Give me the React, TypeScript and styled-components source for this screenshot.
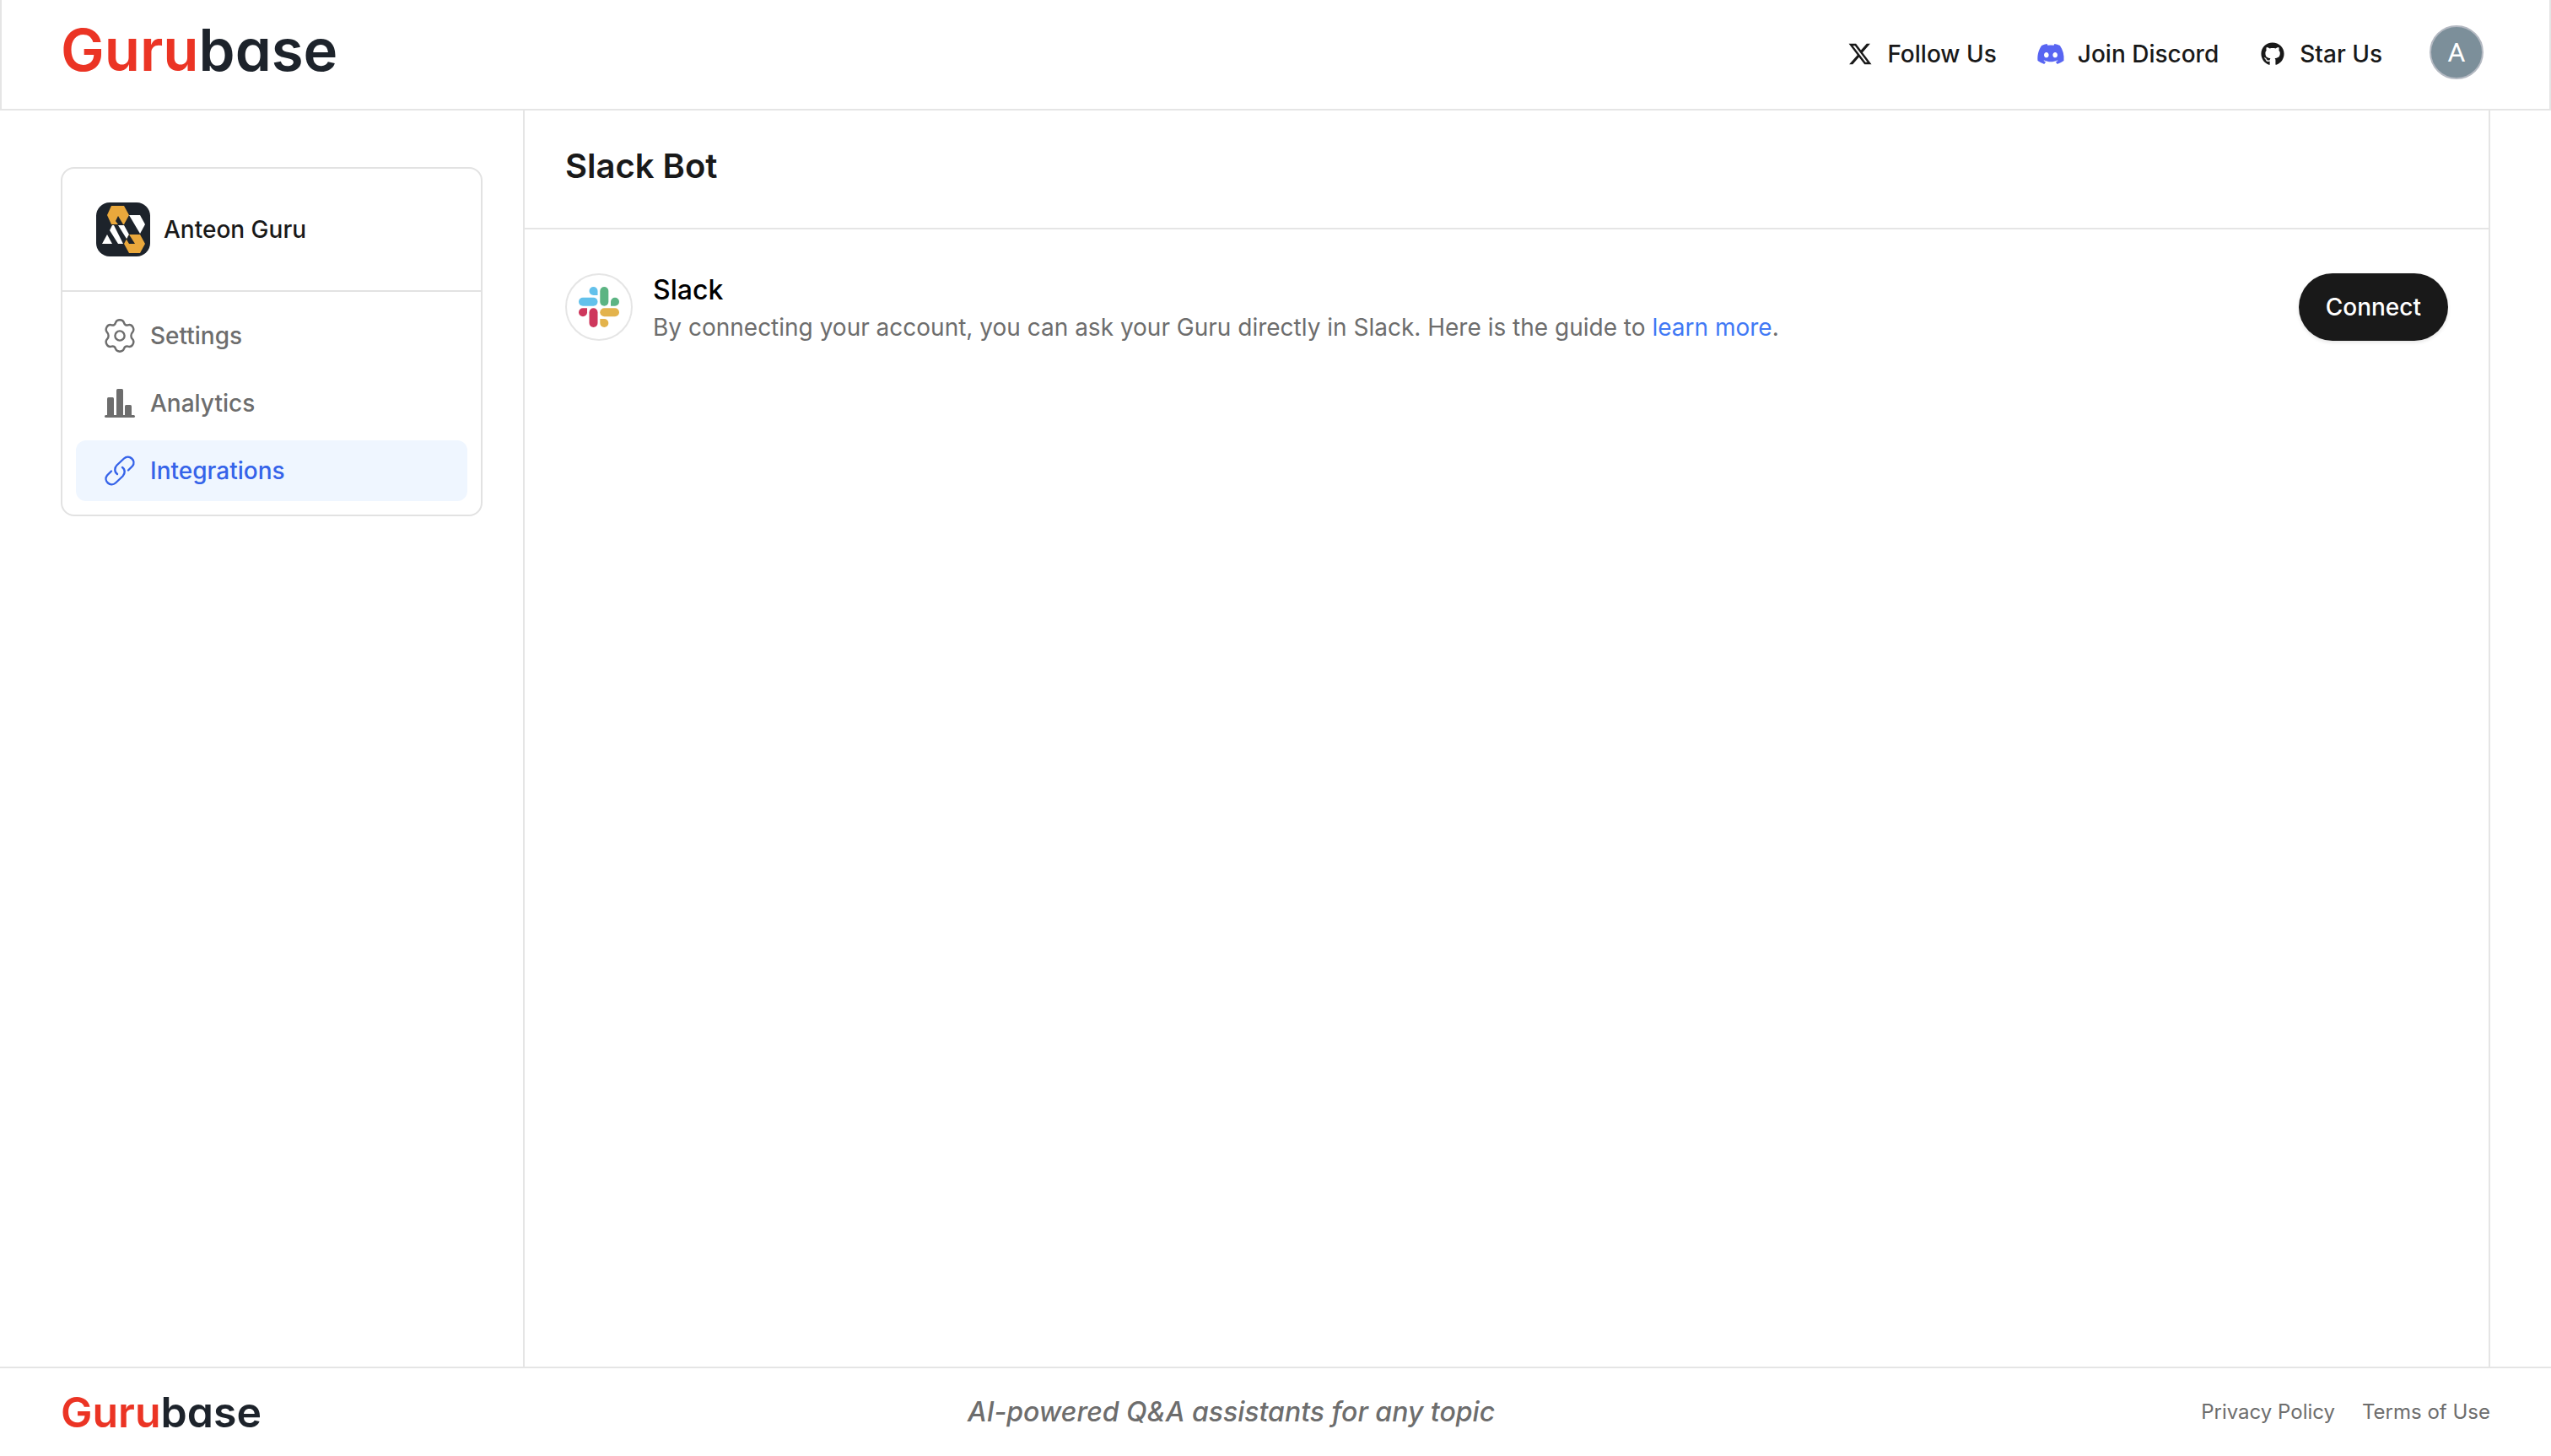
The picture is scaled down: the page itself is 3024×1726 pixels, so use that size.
import React from "react";
import styled, { createGlobalStyle } from "styled-components";
import { FaXTwitter, FaDiscord, FaGithub } from "react-icons/fa6";

const line = "#e5e5e5";
const ink = "#191919";
const muted = "#6d6d6d";

const GlobalStyle = createGlobalStyle`
  *, *::before, *::after { box-sizing: border-box; }
  body { margin: 0; background: #ffffff; color: ${ink}; font-family: Inter, "Liberation Sans", sans-serif; font-size: 28px; line-height: 40px; }
  h1, h2, p, ul { margin: 0; padding: 0; }
  ul { list-style: none; }
  a { color: inherit; text-decoration: none; }
`;

const Page = styled.div`
  display: flex;
  flex-direction: column;
  min-height: 100vh;
`;

const Header = styled.header`
  display: flex;
  align-items: flex-start;
  justify-content: space-between;
  padding: 30px 78px 35px 70px;
  border: 2px solid ${line};
  border-top: 0;
`;

const Wordmark = styled.a<{ $size: number; $line: number }>`
  font-size: ${(p) => p.$size}px;
  line-height: ${(p) => p.$line}px;
  font-weight: 600;
  font-feature-settings: "cv11";
  color: #1d232b;
  span { color: #eb3424; }
`;

const HeaderNav = styled.nav`
  display: flex;
  align-items: center;
  gap: 48px;
`;

const SocialLink = styled.a`
  display: flex;
  align-items: center;
  gap: 16px;
  padding-top: 4px;
  font-weight: 500;
`;

const IconBox = styled.span<{ $size: number; $color?: string }>`
  display: flex;
  align-items: center;
  justify-content: center;
  width: ${(p) => p.$size}px;
  height: ${(p) => p.$size}px;
  color: ${(p) => p.$color || "inherit"};
  svg { flex: none; overflow: visible; }
`;

const Avatar = styled.button`
  display: flex;
  align-items: center;
  justify-content: center;
  width: 64px;
  height: 64px;
  margin-left: 8px;
  padding: 0;
  border: 2px solid #b4b9c2;
  border-radius: 50%;
  background: #7c8f9a;
  color: #ffffff;
  font: 400 32px/40px Roboto, Inter, sans-serif;
`;

const Body = styled.div`
  flex: 1;
  display: flex;
  padding: 0 72px;
`;

const Sidebar = styled.aside`
  flex: none;
  width: 500px;
  margin: 67px 48px 0 0;
`;

const Card = styled.div`
  border: 2px solid #e2e2e2;
  border-radius: 16px;
`;

const GuruHead = styled.div`
  display: flex;
  align-items: center;
  gap: 16px;
  padding: 40px;
  border-bottom: 2px solid #e2e2e2;
  font-weight: 500;
`;

const Menu = styled.ul`
  display: flex;
  flex-direction: column;
  gap: 8px;
  && { padding: 16px; }
`;

const MenuLink = styled.a<{ $active?: boolean }>`
  display: flex;
  align-items: center;
  gap: 16px;
  padding: 16px 32px;
  border-radius: 12px;
  font-weight: 500;
  color: ${(p) => (p.$active ? "#3563e9" : muted)};
  background: ${(p) => (p.$active ? "#eff6ff" : "transparent")};
`;

const Main = styled.main`
  flex: 1;
  border: solid ${line};
  border-width: 0 2px;
`;

const TitleBar = styled.div`
  padding: 42px 48px 49px;
  border-bottom: 2px solid ${line};
`;

const Title = styled.h1`
  font-size: 40px;
  line-height: 48px;
  font-weight: 600;
`;

const Integration = styled.section`
  display: flex;
  align-items: flex-start;
  gap: 24px;
  padding: 52px 48px;
`;

const SlackBadge = styled.div`
  display: flex;
  align-items: center;
  justify-content: center;
  width: 80px;
  height: 80px;
  border: 2px solid ${line};
  border-radius: 50%;
`;

const Details = styled.div`
  flex: 1;
`;

const Name = styled.h2`
  font-size: 32px;
  line-height: 40px;
  font-weight: 500;
  color: #000000;
`;

const Description = styled.p`
  line-height: 48px;
  color: ${muted};
  a { color: #4179f5; }
`;

const ConnectButton = styled.button`
  height: 80px;
  padding: 0 32px;
  border: 0;
  border-radius: 40px;
  background: ${ink};
  color: #ffffff;
  font: 500 28px/40px Inter, "Liberation Sans", sans-serif;
  box-shadow: 0 2px 4px rgba(0, 0, 0, 0.1);
`;

const Footer = styled.footer`
  display: flex;
  align-items: center;
  justify-content: space-between;
  padding: 28px 72px;
  border-top: 2px solid ${line};
  color: ${muted};
`;

const Tagline = styled.p`
  font-size: 32px;
  line-height: 48px;
  font-weight: 500;
  font-style: italic;
`;

const Legal = styled.nav`
  display: flex;
  gap: 32px;
  font-size: 24px;
  line-height: 32px;
`;

function GuruLogo() {
  return (
    <svg width="64" height="64" viewBox="0 0 64 64" aria-hidden="true">
      <rect width="64" height="64" rx="16" fill="#1d232b" />
      <path d="M18 4h15l6 11-6 11H18l-5-11z" fill="#eaa83c" />
      <path d="M39 38h13l6 11-6 11H39l-6-11z" fill="#eaa83c" />
      <path d="M39 15h13l6 11-6 11z" fill="#fff" />
      <path d="M26 16l6 10h-6l-3-4z" fill="#1d232b" />
      <path d="M13 38l6 11H7zM19 27h2l11 22h-6L16 33zM26 27h7l6 11-3 5z" fill="#fff" />
      <path d="M39 38l7 11h-7l-3-5z" fill="#1d232b" />
    </svg>
  );
}

function GearIcon() {
  return (
    <svg width="36" height="40" viewBox="0 0 36 40" fill="none" stroke="currentColor" strokeWidth="2.4" strokeLinejoin="round" aria-hidden="true">
      <circle cx="18" cy="20" r="5.6" />
      <path d="M13 4.6C14 1.700 16 1.300 18 1.300s4 .4 5 3.300c.6 2.500 2.400 3.300 4.700 2.700 3-.8 4.600.5 5.700 2.400 1.300 2.200 1.600 4.200-.5 6.400-2 2-2 5.800 0 7.800 2.100 2.200 1.800 4.200.5 6.400-1.100 1.900-2.700 3.200-5.700 2.400-2.300-.6-4.100.2-4.700 2.700-1 2.900-3 3.300-5 3.300s-4-.4-5-3.300c-.6-2.500-2.400-3.300-4.700-2.700-3 .8-4.600-.5-5.700-2.400-1.300-2.200-1.600-4.200.5-6.400 2-2 2-5.800 0-7.800-2.100-2.200-1.800-4.200-.5-6.400 1.100-1.900 2.700-3.200 5.700-2.400 2.300.6 4.100-.2 4.700-2.700z" />
    </svg>
  );
}

function ChartIcon() {
  return (
    <svg width="36" height="36" viewBox="0 0 36 36" fill="currentColor" aria-hidden="true">
      <rect x="3" y="11" width="8" height="23" rx="1.500" />
      <rect x="14" y="1" width="8" height="33" rx="1.500" />
      <rect x="24" y="20" width="8" height="14" rx="1.500" />
      <rect x="0" y="32" width="36" height="3" rx="1.500" />
    </svg>
  );
}

function LinkIcon() {
  return (
    <svg width="36" height="36" viewBox="0 0 36 36" fill="none" stroke="currentColor" strokeWidth="2.4" strokeLinecap="round" strokeLinejoin="round" aria-hidden="true">
      <path d="M15 22C11.500 19.500 11.500 14.500 14.500 11.500L23 3.500C29-2 38 6 33 12.500L28 17.500" />
      <path d="M21 14C24.500 16.500 24.500 21.500 21.500 24.500L13 32.500C7 38-2 30 3 23.500L8 18.500" />
    </svg>
  );
}

function SlackLogo() {
  return (
    <svg width="48" height="48" viewBox="0 0 48 48" aria-hidden="true">
      <g fill="#63c1eb">
        <path d="M17.500 0a5 5 0 0 0 0 10h5V5a5 5 0 0 0-5-5z" />
        <rect x="0" y="12.700" width="22.500" height="10" rx="5" />
      </g>
      <g fill="#5cb483">
        <rect x="25.300" y="0" width="10" height="22.700" rx="5" />
        <path d="M48 17.700a5 5 0 0 0-10 0v5h5a5 5 0 0 0 5-5z" />
      </g>
      <g fill="#e3b34c">
        <rect x="25.300" y="25.300" width="22.700" height="10" rx="5" />
        <path d="M30.300 48a5 5 0 0 0 0-10h-5v5a5 5 0 0 0 5 5z" />
      </g>
      <g fill="#ce375c">
        <rect x="12.500" y="25.300" width="10" height="22.700" rx="5" />
        <path d="M0 30.300a5 5 0 0 0 10 0v-5H5a5 5 0 0 0-5 5z" />
      </g>
    </svg>
  );
}

export default function App() {
  return (
    <Page>
      <GlobalStyle />
      <Header>
        <Wordmark href="#" $size={69} $line={58}><span>Guru</span>base</Wordmark>
        <HeaderNav>
          <SocialLink href="#"><IconBox $size={32}><FaXTwitter size={30} /></IconBox>Follow Us</SocialLink>
          <SocialLink href="#"><IconBox $size={32} $color="#5865f2"><FaDiscord size={34} /></IconBox>Join Discord</SocialLink>
          <SocialLink href="#"><IconBox $size={32}><FaGithub size={28} /></IconBox>Star Us</SocialLink>
          <Avatar type="button">A</Avatar>
        </HeaderNav>
      </Header>
      <Body>
        <Sidebar>
          <Card>
            <GuruHead><GuruLogo />Anteon Guru</GuruHead>
            <Menu>
              <li><MenuLink href="#"><IconBox $size={40}><GearIcon /></IconBox>Settings</MenuLink></li>
              <li><MenuLink href="#"><IconBox $size={40}><ChartIcon /></IconBox>Analytics</MenuLink></li>
              <li><MenuLink href="#" $active aria-current="page"><IconBox $size={40}><LinkIcon /></IconBox>Integrations</MenuLink></li>
            </Menu>
          </Card>
        </Sidebar>
        <Main>
          <TitleBar><Title>Slack Bot</Title></TitleBar>
          <Integration>
            <SlackBadge><SlackLogo /></SlackBadge>
            <Details>
              <Name>Slack</Name>
              <Description>
                By connecting your account, you can ask your Guru directly in Slack. Here is the guide to <a href="#">learn more</a>.
              </Description>
            </Details>
            <ConnectButton type="button">Connect</ConnectButton>
          </Integration>
        </Main>
      </Body>
      <Footer>
        <Wordmark href="#" $size={50} $line={48}><span>Guru</span>base</Wordmark>
        <Tagline>AI-powered Q&amp;A assistants for any topic</Tagline>
        <Legal><a href="#">Privacy Policy</a><a href="#">Terms of Use</a></Legal>
      </Footer>
    </Page>
  );
}
